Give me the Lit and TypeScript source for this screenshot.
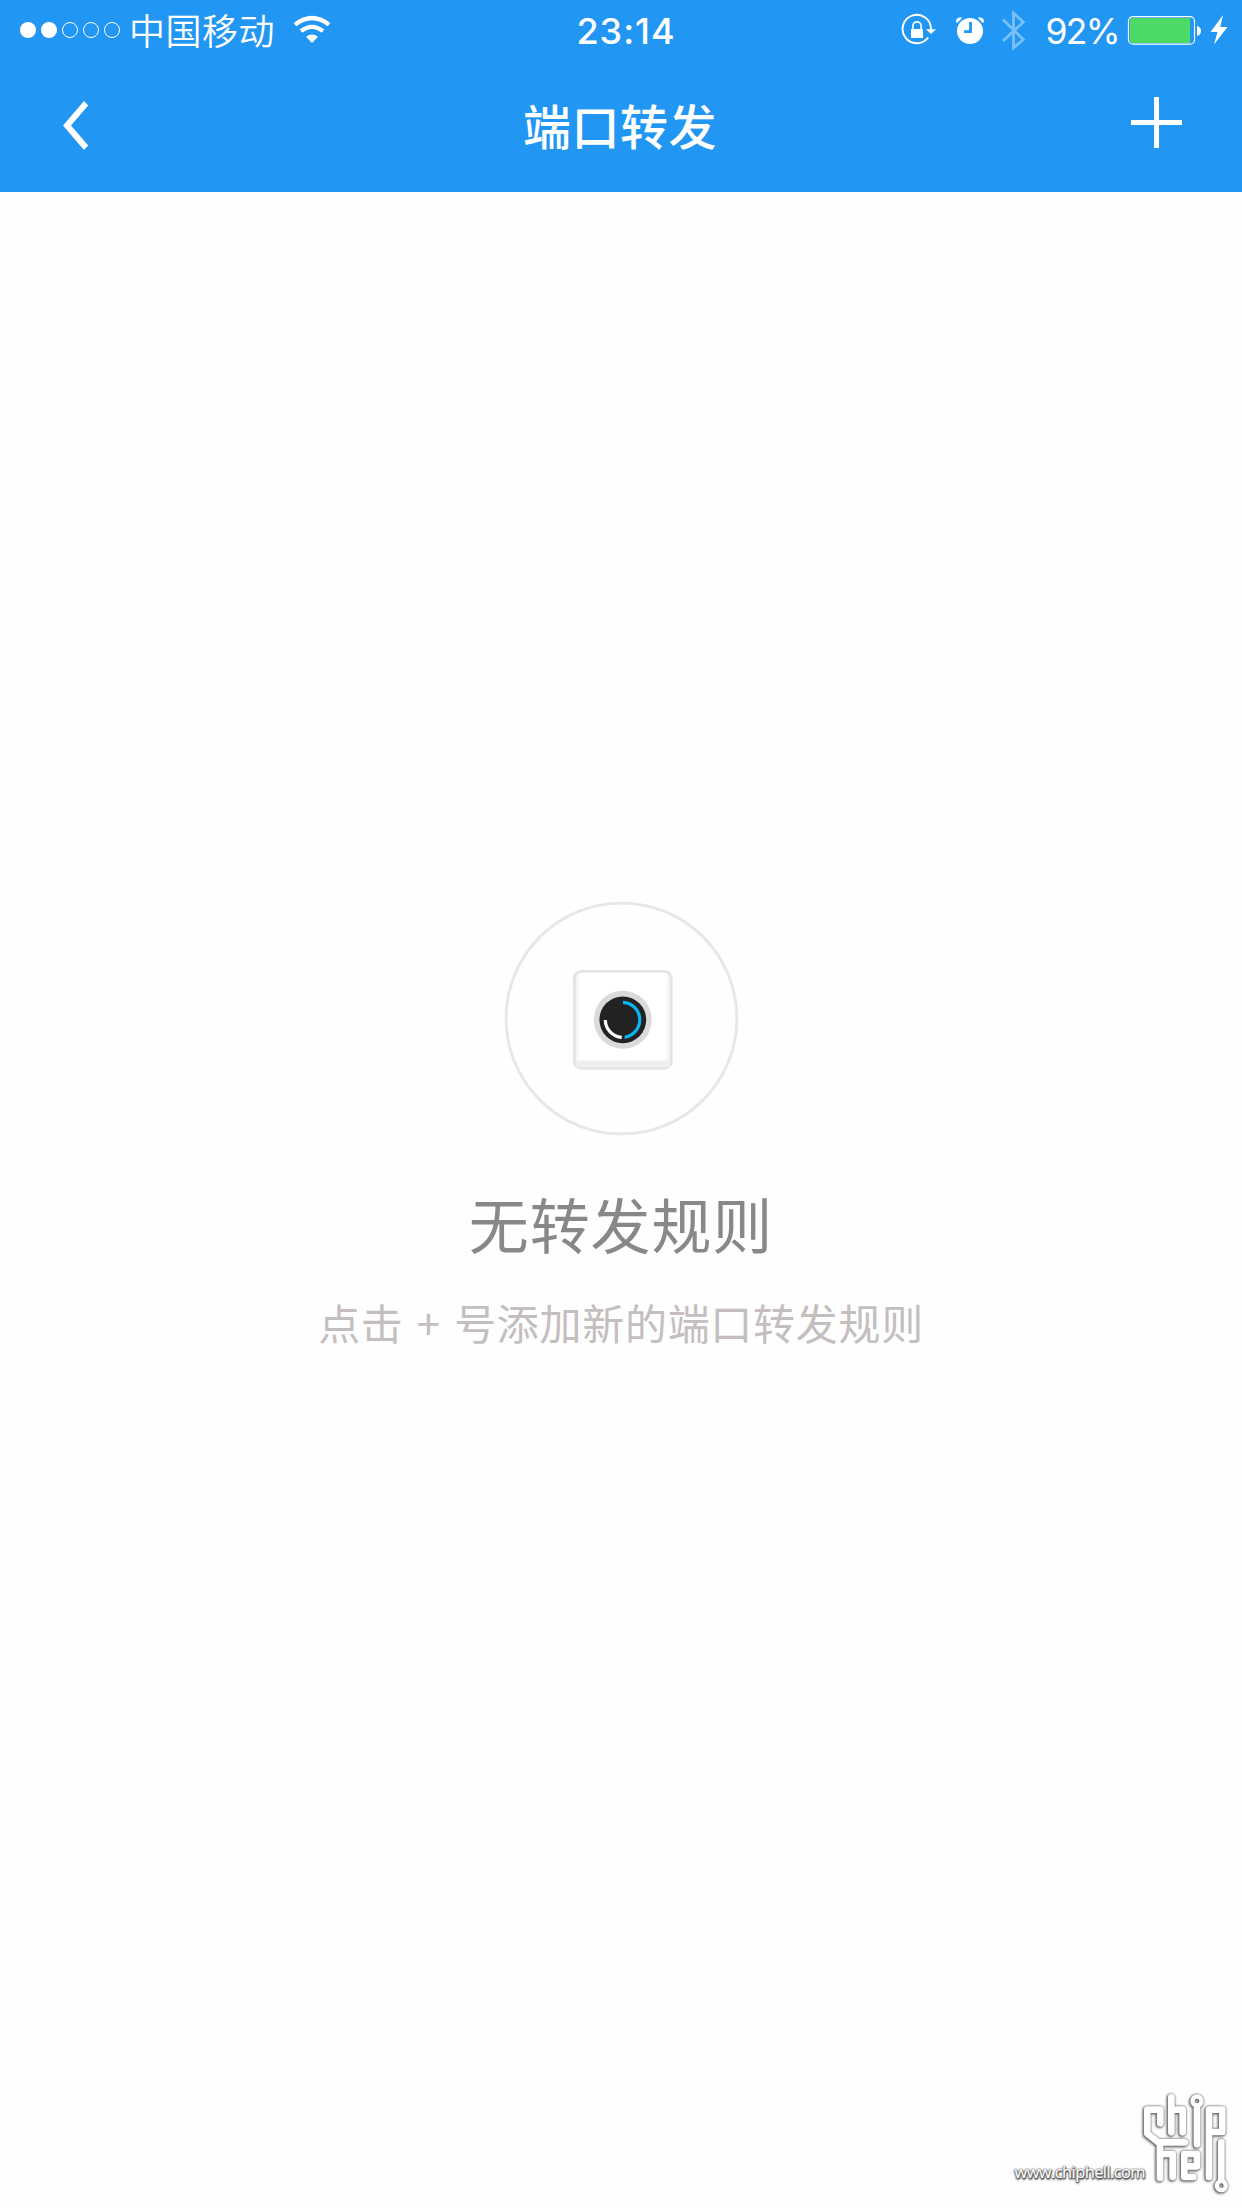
import { LitElement, html, css, svg } from "lit";
import { customElement, property } from "lit/decorators.js";

@customElement("status-bar")
class StatusBar extends LitElement {
  @property({ type: Number }) signal = 2;
  @property({ type: Number }) battery = 92;

  static styles = css`
    :host {
      display: grid;
      grid-template-columns: 1fr auto 1fr;
      height: 60px;
      color: #fff;
    }
    svg {
      display: block;
      flex: none;
    }
    .side {
      display: flex;
      align-items: flex-start;
    }
    .left {
      padding-left: 20px;
    }
    .right {
      justify-content: flex-end;
    }
    .carrier {
      margin-left: 9px;
      font: 350 36px/58px "Noto Sans CJK SC", sans-serif;
      letter-spacing: 0.5px;
      white-space: nowrap;
    }
    .wifi {
      margin-left: 18px;
    }
    .time {
      font: 500 36px/63px Inter, sans-serif;
      padding-left: 10px;
      letter-spacing: 1px;
    }
    .percent {
      font: 400 35.5px/63px Inter, sans-serif;
      letter-spacing: -1.6px;
      margin-right: 6.9px;
    }
  `;

  render() {
    return html`
      <div class="side left">
        <svg width="100" height="60" viewBox="0 0 100 60">
          ${[0, 1, 2, 3, 4].map((i) =>
            i < this.signal
              ? svg`<circle cx=${8 + i * 21} cy="30" r="8" fill="#fff" />`
              : svg`<circle cx=${8 + i * 21} cy="30" r="7.5" fill="none" stroke="#fff" stroke-width="1" />`
          )}
        </svg>
        <span class="carrier">中国移动</span>
        <svg class="wifi" width="38" height="60" viewBox="0 0 38 60">
          <path d="M19 43 L13 36.8 Q19 32.4 25 36.8 Z" fill="#fff" />
          <path d="M8 31.2 Q19 22.4 30 31.2 M2 24.6 Q19 11.4 36 24.6" fill="none" stroke="#fff" stroke-width="4.2" />
        </svg>
      </div>
      <div class="time">23:14</div>
      <div class="side right">
        <svg width="50" height="60" viewBox="900 0 50 60">
          <path d="M928.2 37.5 A14.2 14.2 0 1 1 931 29.5" fill="none" stroke="#fff" stroke-width="1.9" />
          <path d="M926 29.2 H936 L931 34 Z" fill="#fff" />
          <rect x="911" y="29" width="12" height="9" fill="#fff" />
          <path d="M912.9 29.5 V26 A4.1 4.1 0 0 1 921.1 26 V29.5" fill="none" stroke="#fff" stroke-width="1.6" />
        </svg>
        <svg width="50" height="60" viewBox="950 0 50 60">
          <circle cx="970" cy="31" r="13" fill="#fff" />
          <path d="M956.3 22.5 Q955 17.5 961 17.3 L962 18 L957.2 23 Z M983.7 22.5 Q985 17.5 979 17.3 L978 18 L982.8 23 Z" fill="#fff" />
          <path d="M970.5 22 V31.7 H964" fill="none" stroke="#2196f3" stroke-width="2.8" />
        </svg>
        <svg width="45" height="60" viewBox="1000 0 45 60">
          <path d="M1003 19.5 L1023.3 39.5 L1013.5 48 V13.2 L1023.3 22 L1003 41" fill="none" stroke="#fff" stroke-opacity="0.4" stroke-width="2.8" />
        </svg>
        <span class="percent">${this.battery}%</span>
        <svg width="116" height="60" viewBox="1126 0 116 60">
          <rect x="1128.5" y="16.6" width="66" height="27.6" rx="4.5" fill="none" stroke="#fff" stroke-width="1.2" />
          <path d="M1130 20 Q1130 18 1132 18 H1190 V43 H1132 Q1130 43 1130 41 Z" fill="#4cd964" />
          <path d="M1197 26 Q1201 27 1201 31 Q1201 35 1197 36 Z" fill="#fff" />
          <path d="M1223 15 L1210.5 32 H1217.5 L1214 44.5 L1227.5 27 H1220.3 Z" fill="#fff" />
        </svg>
      </div>
    `;
  }
}

@customElement("nav-bar")
class NavBar extends LitElement {
  @property() heading = "";

  static styles = css`
    :host {
      display: grid;
      grid-template-columns: 1fr auto 1fr;
      height: 132px;
      color: #fff;
    }
    svg {
      display: block;
    }
    .back {
      padding: 41px 0 0 63px;
    }
    .title {
      margin: 0 2px 0 0;
      font: 500 48px/129px "Noto Sans CJK SC", sans-serif;
      letter-spacing: 0.5px;
    }
    .add {
      padding: 37px 60px 0 0;
      justify-self: end;
    }
  `;

  render() {
    return html`
      <div class="back">
        <svg width="26" height="49" viewBox="0 0 26 49">
          <path d="M0 24.5 L21 0 L25.2 4.5 L8 24.5 L25.2 44.5 L21 49 Z" fill="#fff" />
        </svg>
      </div>
      <h1 class="title">${this.heading}</h1>
      <div class="add">
        <svg width="51" height="51" viewBox="0 0 51 51">
          <path d="M23 0 H28 V23 H51 V28 H28 V51 H23 V28 H0 V23 H23 Z" fill="#fff" />
        </svg>
      </div>
    `;
  }
}

@customElement("site-badge")
class SiteBadge extends LitElement {
  static styles = css`
    :host {
      display: flex;
      align-items: flex-start;
    }
    .url {
      margin: 77px -1px 0 0;
      font: 400 16.5px/20px "Open Sans", sans-serif;
      letter-spacing: -0.6px;
      color: #fff;
      text-shadow: 0 0 2px #444, 1px 1px 1px #555, 0 1px 2px #555, 0 2px 2px #777, 0 0 1px #555;
      white-space: nowrap;
      -webkit-text-stroke: 0.2px #fff;
    }
    .mark {
      display: block;
      overflow: visible;
      filter: drop-shadow(0 0 1px #666) drop-shadow(-0.5px 1px 1.2px #666);
    }
  `;

  render() {
    return html`
      <span class="url">www.chiphell.com</span>
      <svg class="mark" width="98" height="123" viewBox="42 0 294 369">
        <g fill="none" stroke="#fff" stroke-width="20" stroke-linecap="round" stroke-linejoin="round">
          <path d="M91 115 V74 H52 V146 L90 176 V278" />
          <path d="M86 172 H165" />
          <path d="M124 37 V142 M124 74 H158 V142" />
          <path d="M201 66 V178" />
          <path d="M237 74 V276 M237 74 H277 V141 H237" />
          <path d="M90 207 H128 V276" />
          <path d="M163 207 H201 V244 H163 M163 207 V276 H190" />
          <path d="M274 172 V284" />
          <circle cx="201" cy="48" r="13.5" stroke-width="13" />
          <circle cx="274" cy="302" r="13.5" stroke-width="13" />
        </g>
      </svg>
    `;
  }
}

@customElement("app-root")
class AppRoot extends LitElement {
  static styles = css`
    :host {
      display: flex;
      flex-direction: column;
      position: relative;
      width: 1242px;
      height: 2208px;
      background: #fefefe;
      overflow: hidden;
    }
    header {
      background: #2196f3;
    }
    main {
      display: flex;
      flex-direction: column;
      align-items: center;
      padding-top: 709px;
    }
    .device {
      display: block;
    }
    .empty {
      margin: 40px 0 0;
      font: 400 60px/92px "Noto Sans CJK SC", sans-serif;
      letter-spacing: 0.9px;
      color: #888;
    }
    .hint {
      margin: 21px 0 0;
      font: 400 42px/64px "Noto Sans CJK SC", sans-serif;
      letter-spacing: 0.7px;
      word-spacing: 3.2px;
      color: #c4bebe;
    }
    .badge {
      position: absolute;
      right: 0;
      bottom: 0;
    }
  `;

  render() {
    return html`
      <header>
        <status-bar signal="2" battery="92"></status-bar>
        <nav-bar heading="端口转发"></nav-bar>
      </header>
      <main>
        <svg class="device" width="236" height="236" viewBox="0 0 236 236">
          <defs>
            <linearGradient id="edge" x1="0" x2="1" y1="0" y2="0">
              <stop offset="0" stop-color="#eee" />
              <stop offset="0.06" stop-color="#fff" />
              <stop offset="0.94" stop-color="#fff" />
              <stop offset="1" stop-color="#eee" />
            </linearGradient>
          </defs>
          <circle cx="118.5" cy="117.5" r="115.4" fill="none" stroke="#e8e6e7" stroke-width="2.9" />
          <rect x="71.3" y="70.3" width="97" height="97" rx="7" fill="url(#edge)" stroke="#e4e4e4" stroke-width="2.8" />
          <rect x="72.7" y="159.5" width="94.2" height="6.6" fill="#efefef" />
          <circle cx="119.8" cy="118.8" r="29" fill="#dadada" />
          <circle cx="119.8" cy="118.8" r="23.4" fill="#222" />
          <path d="M120 101.3 A17.6 17.6 0 0 1 121.6 136.3" fill="none" stroke="#09b6f2" stroke-width="3.2" />
          <path d="M102.3 119 A17.6 17.6 0 0 0 118.7 136.3" fill="none" stroke="#fff" stroke-width="3.2" />
        </svg>
        <h2 class="empty">无转发规则</h2>
        <p class="hint">点击 + 号添加新的端口转发规则</p>
      </main>
      <site-badge class="badge"></site-badge>
    `;
  }
}
